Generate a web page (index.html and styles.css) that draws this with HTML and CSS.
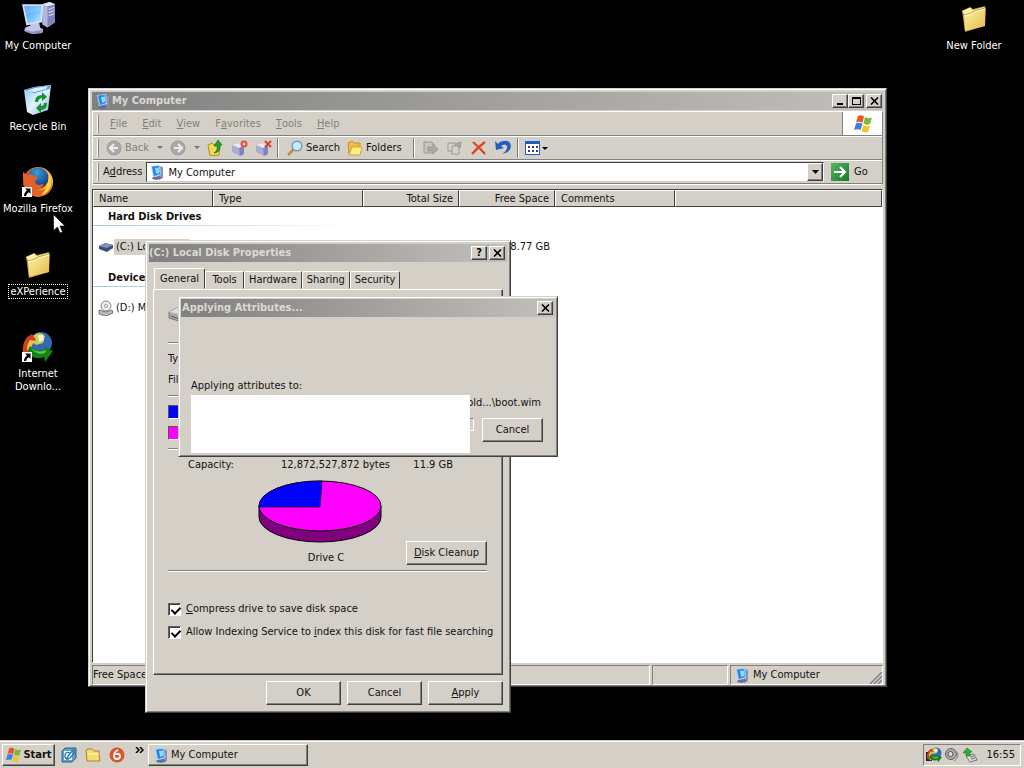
FILE: index.html
```html
<!DOCTYPE html>
<html lang="en">
<head>
<meta charset="utf-8">
<title>Desktop</title>
<link rel="stylesheet" href="styles.css">
</head>
<body>
<svg class="defs" width="0" height="0" aria-hidden="true">
  <defs>
    <linearGradient id="scr" x1="0" y1="0" x2="1" y2="1"><stop offset="0" stop-color="#2f8df0"/><stop offset=".6" stop-color="#7cc8fb"/><stop offset="1" stop-color="#b9eaff"/></linearGradient>
    <linearGradient id="fold" x1="0" y1="0" x2="1" y2="1"><stop offset="0" stop-color="#fff3a6"/><stop offset="1" stop-color="#e3b94c"/></linearGradient>
    <linearGradient id="binG" x1="0" y1="0" x2="1" y2="1"><stop offset="0" stop-color="#8fc3ee"/><stop offset=".5" stop-color="#e2f3ff"/><stop offset="1" stop-color="#7fb2e2"/></linearGradient>
    <linearGradient id="fox" x1="0" y1="0" x2="1" y2="0"><stop offset="0" stop-color="#d8401a"/><stop offset=".6" stop-color="#f38b1c"/><stop offset="1" stop-color="#ffd84a"/></linearGradient>
    <radialGradient id="globe" cx=".45" cy=".25" r=".8"><stop offset="0" stop-color="#3a9cd8"/><stop offset="1" stop-color="#0b2f7c"/></radialGradient>
    <linearGradient id="goG" x1="0" y1="0" x2="1" y2="1"><stop offset="0" stop-color="#5cb465"/><stop offset="1" stop-color="#127a24"/></linearGradient>
    <symbol id="pc" viewBox="0 0 32 32">
      <path d="M20 3l7-2 5 2v17l-7 5-5-3z" fill="#b3b5dd"/><path d="M25 5l7-2v17l-7 5z" fill="#8184bd"/><path d="M20 3l7-2 5 2-7 2z" fill="#e6e7f8"/>
      <path d="M26 8l5-2M26 11l5-2M26 14l5-2" stroke="#dfe1f5"/>
      <path d="M8 21l9-1 1 5 3 2-1 3-9 1-8-3 1-3 5-2z" fill="#c4c5e4"/><path d="M3 27l8 2 9-2-1 3-9 1-6-2z" fill="#8f91c0"/>
      <path d="M1 3l20 0-1 17L5 23z" fill="#d8dcf4"/><path d="M3 5l16-.5-1 14L6.500 21z" fill="url(#scr)"/><path d="M3 5l16-.5-.3 4L4.500 13z" fill="#a2d6ff" opacity=".4"/>
    </symbol>
    <symbol id="pcs" viewBox="0 0 14 15">
      <path d="M9 1l4 1v11l-4 2z" fill="#8c8fb8"/><path d="M3 12l6-1 3 2-5 2-5-1z" fill="#666b9c"/>
      <path d="M1 1l9-1 1 10-8 2z" fill="#a9d3f6"/><path d="M2 1.500l7-.5 1 8-6 2z" fill="#1f86ea"/><path d="M5 3l4-.5 .7 5-3.500 1.500z" fill="#8bdcff"/>
    </symbol>
    <symbol id="folder" viewBox="0 0 28 28">
      <path d="M2 6l8-4 3 2 12-3 1 3-1 17-20 6z" fill="#b98f2e"/><path d="M2 6l8-3.500 3 2.500L24 2l1 3L5 11z" fill="#fff0a0"/>
      <path d="M4 10l7-2 3-3 11-2 0 18-20 5z" fill="url(#fold)"/><path d="M4 10l7-2 3-2 11-3" fill="none" stroke="#a58530" stroke-width=".7"/><path d="M4 11l8-2 3-2 10-3" fill="none" stroke="#fffad2"/>
    </symbol>
    <symbol id="shortcut" viewBox="0 0 10 10"><path d="M0 0h10v10H0z" fill="#fff"/><path d="M3 1.500h5.500V7L6.800 5.300Q4.500 6.500 4 9H2Q2 5.500 5 3.500z" fill="#000"/></symbol>
    <symbol id="idm" viewBox="0 0 32 32">
      <circle cx="20" cy="12" r="11" fill="#3468b4"/><path d="M12 5q7-6 12 0l-2 7-7 2-5-4z" fill="#c8d050"/><path d="M17 4l5 0 1 5-5 2z" fill="#eef6d5"/>
      <path d="M11 3Q0 8 2 23l8 5Q6 13 15 9z" fill="#cf3e23"/><path d="M9 9q-6 8 0 17l3 0Q7 15 15 10z" fill="#f0c447"/>
      <path d="M9 15q8 7 15 3l-2-3 10 5-8 11-1-5q-10 4-17-5z" fill="#14801a"/><path d="M10 17q7 6 15 2l-1 3q-8 3-14-5z" fill="#5ccc4c"/>
    </symbol>
    <symbol id="flag" viewBox="0 0 20 18">
      <path d="M5 1q3-1.500 6 .5L9.500 8Q7 6 3 7.500z" fill="#e8542a"/><path d="M12 2q3 2 7 .5L17 9q-4 1.500-6.500-.5z" fill="#7cb83a"/>
      <path d="M3 8.500q4-1.500 6.500.5L7.500 15Q5 13.500 1 15z" fill="#3f7fd8"/><path d="M10.500 10q3 1.500 6.500.5L15 17q-4 1-6.500-1z" fill="#f5c32c"/>
    </symbol>
    <symbol id="x" viewBox="0 0 9 8"><path d="M1 .5l7 7M8 .5l-7 7" stroke="#000" stroke-width="1.600"/></symbol>
    <symbol id="mail" viewBox="0 0 18 16"><path d="M1 5l8-2 4 3v8l-4 2-8-4z" fill="#a9abd0"/><path d="M1 5l8-2 4 3-5 2z" fill="#e7e7f5"/><path d="M8 8l5-2v8l-4 2z" fill="#8083bb"/></symbol>
  </defs>
</svg>

<main class="desktop">
  <a href="#" class="shortcut s-computer"><svg width="34" height="34"><use href="#pc"/></svg><span>My Computer</span></a>
  <a href="#" class="shortcut s-bin"><svg width="32" height="32" viewBox="1 0 32 32"><path d="M3 6l10-3 17-2-3 25-15 5-6-3z" fill="url(#binG)"/><path d="M3 6l10-3 17-2-2 4-14 4z" fill="#5c9bd4"/><path d="M5 7l9-3 13-2-2 3-11 3z" fill="#d8efff"/><path d="M14 18q0-7 7-7V8l5 5-5 4v-3q-3 0-4 4zM26 19q0 7-6 7v3l-5-5 5-5v3q3 0 3-3z" fill="#159526"/></svg><span>Recycle Bin</span></a>
  <a href="#" class="shortcut s-firefox"><svg width="32" height="32" viewBox="1 0 32 32"><circle cx="17" cy="16" r="15" fill="url(#fox)"/><circle cx="17" cy="12" r="10.500" fill="url(#globe)"/><path d="M2 6l4 3q4-2 7 1l4 1-3 4q0 3 4 4l5-1q-3 6-9 4 5 5 12 0 5-5 1-14 7 8 2 17-6 7-15 5Q1 26 2 6z" fill="#e4622a"/><path d="M28 8q5 8 0 16-3 4-8 5 8-8 8-21z" fill="#ffd33a"/><use href="#shortcut" x="1" y="21" width="10" height="10"/></svg><span>Mozilla Firefox</span></a>
  <a href="#" class="shortcut s-exp"><svg width="28" height="28"><use href="#folder"/></svg><span class="focus">eXPerience</span></a>
  <a href="#" class="shortcut s-idm"><svg width="32" height="32" viewBox="1 0 32 32"><use href="#idm" width="32" height="32"/><use href="#shortcut" x="1" y="21" width="10" height="10"/></svg><span>Internet Downlo...</span></a>
  <a href="#" class="shortcut s-new"><svg width="28" height="28"><use href="#folder"/></svg><span>New Folder</span></a>

  <section class="window explorer" aria-label="My Computer">
    <header class="title"><svg width="14" height="15"><use href="#pcs"/></svg><h1>My Computer</h1>
      <button class="cap" aria-label="Minimize"><svg width="9" height="8"><path d="M1 6h6v2H1z"/></svg></button><button class="cap" aria-label="Maximize"><svg width="9" height="8"><path d="M0 0h9v8H0zM1 2v5h7V2z" fill-rule="evenodd"/></svg></button><button class="cap close" aria-label="Close"><svg width="9" height="8"><use href="#x"/></svg></button>
    </header>
    <div class="bars">
      <nav class="bar menu"><i class="grip"></i><button><u>F</u>ile</button><button><u>E</u>dit</button><button><u>V</u>iew</button><button>F<u>a</u>vorites</button><button><u>T</u>ools</button><button><u>H</u>elp</button><span class="brand"><svg width="20" height="18"><use href="#flag"/></svg></span></nav>
      <div class="bar tools"><i class="grip"></i>
        <button class="off back"><svg width="16" height="16"><circle cx="8" cy="8" r="7" fill="#aaa" stroke="#999"/><path d="M8 4L4 8l4 4M4 8h8" fill="none" stroke="#eee" stroke-width="2"/></svg>Back</button>
        <button aria-label="Back list"><svg width="7" height="4"><path d="M1 0h6L4 3z" fill="#777"/></svg></button>
        <button aria-label="Forward"><svg width="16" height="16"><circle cx="8" cy="8" r="7" fill="#aaa" stroke="#999"/><path d="M8 4l4 4-4 4M12 8H4" fill="none" stroke="#eee" stroke-width="2"/></svg></button>
        <button aria-label="Forward list"><svg width="7" height="4"><path d="M1 0h6L4 3z" fill="#777"/></svg></button>
        <button class="sq" aria-label="Up"><svg width="16" height="16" viewBox="0 0 16 16"><path d="M1 5l4-2 2 2 6-1-1 11-9 1z" fill="#f6d855" stroke="#b28d20"/><path d="M7 13q4-2 3-7H7l4-6 4 5h-2q1 7-6 8z" fill="#28a328" stroke="#10701a" stroke-width=".7"/></svg></button>
        <button class="sq" aria-label="Move to"><svg width="18" height="16"><use href="#mail"/><circle cx="13" cy="4" r="2.500" fill="none" stroke="#e05038" stroke-width="2"/></svg></button>
        <button class="sq" aria-label="Copy to"><svg width="18" height="16"><use href="#mail"/><path d="M10 1l6 6M16 1l-6 6" stroke="#d8402a" stroke-width="2"/></svg></button>
        <i class="sep"></i>
        <button><svg width="16" height="16"><path d="M1 15l6-6" stroke="#c48a4a" stroke-width="2.500"/><circle cx="10" cy="6" r="4.800" fill="#c5ecfb" stroke="#7099bd" stroke-width="1.500"/></svg>Search</button>
        <button class="folders"><svg width="16" height="16"><path d="M1 3l4-2 2 2h6v11H2z" fill="#eebd3d" stroke="#c3942b"/><path d="M5 7h10l-2 8H2z" fill="#ffec83" stroke="#d2a636"/></svg>Folders</button>
        <i class="sep"></i>
        <button class="sq" aria-label="Move"><svg width="16" height="16" fill="#c6c3bb" stroke="#999"><path d="M1 2h8l2 2v9H1z"/><path d="M5 7h5V4l5 5-5 5v-3H5z" fill="#aaa"/></svg></button>
        <button class="sq" aria-label="Copy"><svg width="16" height="16" fill="#d5d2cb" stroke="#999"><path d="M1 3h7v8H1z"/><path d="M5 6h7v8H5z"/><path d="M8 4l6-2-1 6z" fill="#aaa"/></svg></button>
        <button class="sq" aria-label="Delete"><svg width="16" height="16"><path d="M2 2q6 5 12 12M14 2Q7 7 1 14" fill="none" stroke="#df4220" stroke-width="2.200"/></svg></button>
        <button class="sq" aria-label="Undo"><svg width="16" height="16"><path d="M0 1l1 9 8-2-3-2q4-3 6 0 1 4-5 8 9-2 9-8Q15 0 9 1 5 1 3 4z" fill="#1f5fc0"/></svg></button>
        <i class="sep"></i>
        <button class="views" aria-label="Views"><svg width="24" height="16"><path d="M1 1h15v14H1z" fill="#1d5fc0"/><path d="M2 4h13v10H2z" fill="#fff"/><path d="M4 6h2v2H4zm4 0h2v2H8zm4 0h2v2h-2zM4 10h2v2H4zm4 0h2v2H8zm4 0h2v2h-2z" fill="#437"/><path d="M18 7h6l-3 3z"/></svg></button>
      </div>
      <div class="bar address"><i class="grip"></i><label for="addr">A<u>d</u>dress</label>
        <span class="field"><svg width="14" height="15"><use href="#pcs"/></svg><input id="addr" value="My Computer"><button class="drop" aria-label="Open address list"><svg width="7" height="4"><path d="M0 0h7L3.500 4z"/></svg></button></span>
        <button class="go"><svg width="18" height="18"><path d="M0 0h18v18H0z" fill="url(#goG)"/><path d="M3 9h11M9 4l5 5-5 5" fill="none" stroke="#fff" stroke-width="2"/></svg>Go</button>
      </div>
    </div>
    <div class="list">
      <table>
        <colgroup><col class="c1"><col class="c2"><col class="c3"><col class="c3"><col class="c1"><col></colgroup>
        <thead><tr><th>Name</th><th>Type</th><th class="num">Total Size</th><th class="num">Free Space</th><th>Comments</th><th></th></tr></thead>
        <tbody>
          <tr class="group"><td colspan="6">Hard Disk Drives</td></tr>
          <tr class="disk"><td><a href="#"><svg width="16" height="12"><path d="M1 5l6-3 8 2v3l-6 4-8-3z" fill="#414e74"/><path d="M1 5l6-3 8 2-6 3z" fill="#7d91bd"/></svg><span class="sel">(C:) Local Disk</span></a></td><td></td><td></td><td class="num">8.77 GB</td><td></td><td></td></tr>
          <tr class="group"><td colspan="6">Devices</td></tr>
          <tr class="disk"><td><a href="#"><svg width="16" height="16"><circle cx="8" cy="6" r="5" fill="#ececec" stroke="#888"/><circle cx="8" cy="6" r="1.500" fill="#fff" stroke="#999"/><path d="M1 10l7 2 6-2 1 3-7 3-7-2z" fill="#bbb" stroke="#777"/></svg><span>(D:) M</span></a></td><td></td><td></td><td></td><td></td><td></td></tr>
        </tbody>
      </table>
    </div>
    <footer class="status"><span class="wide">Free Space</span><span class="mid"></span><span class="place"><svg width="14" height="15"><use href="#pcs"/></svg>My Computer<svg class="size" width="12" height="12"><path d="M0 12L12 0M4 12l8-8M8 12l4-4" stroke="#808080" stroke-width="1.500"/></svg></span></footer>
  </section>

  <section class="window props" aria-label="Disk properties">
    <header class="title"><h2>(C:) Local Disk Properties</h2><button class="cap" aria-label="Help"><b>?</b></button><button class="cap close" aria-label="Close"><svg width="9" height="8"><use href="#x"/></svg></button></header>
    <div class="tabs"><button class="on">General</button><button>Tools</button><button>Hardware</button><button>Sharing</button><button>Security</button></div>
    <div class="panel">
      <div class="drive"><svg width="32" height="20"><path d="M1 5l8-4 20 3v7l-8 6L1 11z" fill="#aaa" stroke="#777"/><path d="M1 5l8-4 20 3-8 5z" fill="#ddd"/><path d="M3 9l8 3" stroke="#555"/></svg></div>
      <hr>
      <div class="line">Type:</div><div class="line">File system:</div>
      <hr>
      <div class="line"><i class="swatch used"></i></div><div class="line"><i class="swatch free"></i></div>
      <hr>
      <div class="capacity"><span>Capacity:</span><span>12,872,527,872 bytes</span><span>11.9 GB</span></div>
      <div class="chart">
        <figure><svg width="124" height="64" viewBox="0 0 124 64"><path d="M1 26v11a61 25 0 0 0 122 0V26z" fill="#800080" stroke="#000"/><ellipse cx="62" cy="26" rx="61" ry="25" fill="#f0f" stroke="#000"/><path d="M62 27H1A61 25 0 0 1 64 1z" fill="#00f" stroke="#202" stroke-width=".8"/></svg><figcaption>Drive C</figcaption></figure>
        <button class="btn"><u>D</u>isk Cleanup</button>
      </div>
      <hr>
      <div class="checks"><label><input type="checkbox" checked><span><u>C</u>ompress drive to save disk space</span></label>
      <label><input type="checkbox" checked><span>Allow Indexing Service to <u>i</u>ndex this disk for fast file searching</span></label></div>
    </div>
    <div class="actions"><button class="btn">OK</button><button class="btn">Cancel</button><button class="btn"><u>A</u>pply</button></div>
  </section>

  <section class="window applying" aria-label="Applying attributes">
    <header class="title"><h2>Applying Attributes...</h2><button class="cap close" aria-label="Close"><svg width="9" height="8"><use href="#x"/></svg></button></header>
    <div class="progress">
      <p>Applying attributes to:</p><p class="path">old...\boot.wim</p>
      <div class="run"><span class="track"></span><button class="btn">Cancel</button></div>
      <div class="cover"></div>
    </div>
  </section>

  <svg class="cursor" width="12" height="20" viewBox="0 0 12 20"><path d="M.5.5v16l4-3.500 2.500 6 2.500-1-2.500-6H12z" fill="#fff" stroke="#000" stroke-width=".6"/></svg>
</main>

<footer class="taskbar">
  <button class="btn start"><svg width="17" height="16"><use href="#flag"/></svg>Start</button>
  <nav class="quick">
    <a href="#" aria-label="Show desktop"><svg width="16" height="16"><path d="M4 1h11v10l-4 4H1V4z" fill="#5ba2cc" stroke="#28638e"/><path d="M3 4h8v9H3z" fill="#eef8ff"/><path d="M12 3L7 9l-1 3 3-1 5-6zM9 6Q5 4 4 8t4 4" fill="none" stroke="#2d77a8" stroke-width="1.300"/></svg></a>
    <a href="#" aria-label="Folder"><svg width="16" height="16"><path d="M1 3l2-1h4l2 2h5v3l1 7H2z" fill="#f4dc6c" stroke="#a58530"/><path d="M3 7h11" stroke="#fff8c0"/></svg></a>
    <a href="#" aria-label="Burner"><svg width="16" height="16"><circle cx="8" cy="8" r="7.500" fill="#d9562f"/><path d="M9 3Q5 5 5 9q0 3 3 3t3-3q0-2-2-2t-2 1" fill="none" stroke="#fff" stroke-width="1.800"/></svg></a>
    <button aria-label="More"><svg width="9" height="6"><path d="M1 0l3 3-3 3M5 0l3 3-3 3" fill="none" stroke="#000" stroke-width="1.500"/></svg></button>
  </nav>
  <button class="btn task"><svg width="14" height="15"><use href="#pcs"/></svg>My Computer</button>
  <div class="tray"><svg width="16" height="16" viewBox="0 0 32 32"><path d="M0 10h12v18H0z" fill="#123"/><use href="#idm" width="32" height="32"/></svg>
    <svg width="16" height="16"><circle cx="7" cy="7" r="5.500" fill="#aaa" stroke="#666"/><circle cx="6.500" cy="7" r="2.500" fill="#ddd" stroke="#555"/><path d="M13 5q3 5-3 9" fill="none" stroke="#888"/></svg>
    <svg width="16" height="16"><path d="M4 9l8-2 3 6-7 2z" fill="#ddd" stroke="#777"/><path d="M8 10l4-1M9 12l4-1" stroke="#666"/><path d="M4 9V6H1l4-5 5 4H8v4z" fill="#2eac35" stroke="#137a1c" stroke-width=".6"/></svg><time>16:55</time></div>
</footer>
</body>
</html>
```

FILE: styles.css
```css
* { box-sizing: border-box; }
body {
  margin: 0;
  height: 100vh;
  display: flex;
  flex-direction: column;
  overflow: hidden;
  background: #000;
  color: #111;
  font: 11px/14px "DejaVu Sans Condensed", "DejaVu Sans", sans-serif;
}
button, input { font: inherit; color: inherit; margin: 0; }
button { background: none; border: 0; padding: 0; display: flex; align-items: center; white-space: nowrap; }
a { color: inherit; text-decoration: none; }
h1, h2, p, figure { margin: 0; font-size: inherit; }
svg { display: block; flex: none; }
.defs { position: absolute; }
.desktop { position: relative; flex: 1; }

.shortcut {
  position: absolute;
  left: 0;
  width: 76px;
  display: flex;
  flex-direction: column;
  align-items: center;
  gap: 4px;
  color: #fff;
  text-align: center;
  line-height: 13px;
}
.shortcut span { white-space: nowrap; }
.s-computer { top: 1px; }
.s-bin { top: 84px; }
.s-firefox { top: 166px; }
.s-exp { top: 251px; }
.s-idm { top: 331px; }
.s-idm span { white-space: normal; width: 60px; }
.s-new { top: 5px; left: auto; right: 12px; gap: 6px; }
.shortcut .focus { outline: 1px dotted #fff; padding: 0 1px; margin-top: 2px; }

.window {
  position: absolute;
  display: flex;
  flex-direction: column;
  background: #d4d0c8;
  padding: 3px;
  border: 1px solid;
  border-color: #d4d0c8 #404040 #404040 #d4d0c8;
  box-shadow: inset 1px 1px #fff, inset -1px -1px #808080;
}
.title {
  display: flex;
  align-items: center;
  height: 18px;
  flex: none;
  padding-right: 2px;
  background: linear-gradient(90deg, #808080, #c2c0bc);
  color: #dcd9d2;
  font-weight: bold;
}
.title h1, .title h2 { flex: 1; }
.cap, .btn, .drop {
  justify-content: center;
  background: #d4d0c8;
  border: 1px solid;
  border-color: #fff #404040 #404040 #fff;
  box-shadow: inset -1px -1px #808080;
}
.cap { width: 16px; height: 14px; color: #000; }
.close { margin-left: 2px; }

.explorer { left: 88px; top: 88px; right: 137px; bottom: 53px; padding-bottom: 1px; }
.explorer .title { padding: 0 1px 0 4px; gap: 0; }
.explorer .title h1 { padding-left: 2px; }
.bars { border: 1px solid #fff; border-right-color: #808080; margin-top: 1px; }
.bar { display: flex; align-items: center; height: 24px; padding-left: 4px; border-bottom: 1px solid #808080; }
.bar + .bar { border-top: 1px solid #fff; }
.grip { width: 2px; height: 18px; border-right: 1px solid #808080; border-left: 1px solid #fff; }
.menu { color: #848077; gap: 15px; }
.menu .grip { margin-right: -4px; }
.brand { margin-left: auto; align-self: stretch; width: 40px; background: #fff; border-left: 1px solid #808080; display: flex; align-items: center; justify-content: center; }
.tools { gap: 7px; }
.tools button { gap: 3px; }
.tools .off { color: #848077; }
.tools .sq { width: 17px; }
.tools .sep { margin: 0 1px 0 -2px; }
.tools .folders { margin-right: 6px; }
.tools .views { margin-left: -3px; }
.sep { width: 2px; height: 20px; border-left: 1px solid #808080; border-right: 1px solid #fff; }
.address { gap: 4px; }
.field { flex: 1; display: flex; align-items: center; height: 20px; background: #fff; border: 1px solid #404040; border-right-color: #fff; border-bottom-color: #d4d0c8; padding-left: 3px; gap: 3px; }
.field input { flex: 1; min-width: 0; border: 0; background: none; padding: 1px 1px 0; outline: 0; }
.drop { width: 16px; height: 18px; }
.go { gap: 5px; width: 54px; padding-left: 3px; }

.list { flex: 1; min-height: 0; overflow: hidden; margin-top: 4px; background: #fff; border: 1px solid #404040; border-color: #404040 #fff #fff #404040; }
table { width: 100%; table-layout: fixed; border-collapse: separate; border-spacing: 0; }
.c1 { width: 120px; }
.c2 { width: 150px; }
.c3 { width: 96px; }
th { height: 17px; padding: 1px 5px 0; font-weight: normal; text-align: left; background: #d4d0c8; border: 1px solid; border-color: #fff #404040 #404040 #fff; line-height: 14px; }
td { padding: 0 5px; }
.num { text-align: right; }
.group td { height: 19px; padding: 0 0 0 15px; font-weight: bold; background: linear-gradient(90deg, #a9c8da, #fff) no-repeat 0 100% / 262px 1px; }
.disk td { height: 42px; }
.disk td:first-child { padding: 0 0 0 5px; }
.disk a { display: flex; align-items: center; white-space: nowrap; }
.disk a span { padding: 1px 2px; }
.disk .sel { background: #d4d0c8; }

.status { display: flex; gap: 2px; height: 20px; margin-top: 2px; flex: none; }
.status > span { display: flex; align-items: center; border: 1px solid; border-color: #808080 #fff #fff #808080; white-space: nowrap; }
.status .wide { flex: 1; }
.status .mid { width: 76px; }
.status .place { width: 153px; padding-left: 4px; gap: 4px; }
.status .size { margin-left: auto; align-self: flex-end; }

.props { left: 145px; top: 240px; width: 366px; }
.tabs { display: flex; align-items: flex-end; height: 27px; margin: 0 5px; }
.tabs button { justify-content: center; min-width: 39px; height: 18px; padding: 0 4px; border: 1px solid; border-color: #fff #404040 transparent #fff; border-radius: 2px 2px 0 0; }
.tabs .on { height: 21px; padding: 0 5px; }
.panel { margin: 0 4px; padding: 17px 15px 35px 14px; border: 1px solid; border-color: #fff #404040 #404040 #fff; box-shadow: inset -1px -1px #808080; }
hr { margin: 0; height: 2px; border: 0; border-top: 1px solid #808080; border-bottom: 1px solid #fff; }
.drive { height: 35px; }
.line { height: 21px; display: flex; align-items: center; }
hr + .line { margin-top: 4px; }
.line + hr { margin-top: 5px; }
.swatch { width: 14px; height: 14px; border: 1px solid; border-color: #555 #fff #fff #555; }
.used { background: #00f; }
.free { background: #f0f; }
.capacity { display: grid; grid-template-columns: 80px 1fr 63px; margin: 8px 34px 0 20px; text-align: right; }
.capacity span:first-child { text-align: left; }
.chart { display: flex; align-items: flex-end; justify-content: space-between; padding: 8px 0 5px 90px; }
figcaption { text-align: center; margin: 7px 0 0 12px; }
.chart .btn { width: 81px; }
.checks { display: flex; flex-direction: column; gap: 9px; padding-top: 30px; }
.checks label { display: flex; align-items: center; gap: 5px; white-space: nowrap; }
.checks input { appearance: none; width: 13px; height: 13px; flex: none; border: 1px solid; border-color: #606060 #fff #fff #606060; box-shadow: inset 1px 1px #404040; background: #fff; position: relative; }
.checks input:checked::after { content: ""; position: absolute; left: 4px; top: 1px; width: 4px; height: 7px; border: solid #000; border-width: 0 2px 2px 0; transform: rotate(45deg); }
.btn { height: 24px; }
.actions { display: flex; justify-content: flex-end; gap: 6px; padding: 6px 4px 4px; }
.actions .btn { width: 75px; }

.applying { left: 178px; top: 296px; width: 380px; padding: 2px; }
.applying .title { padding-left: 1px; }
.progress { position: relative; padding: 62px 12px 12px 10px; }
.progress .path { text-align: right; margin: 3px 2px 8px 0; }
.run { display: flex; gap: 8px; }
.track { flex: 1; height: 13px; border: 1px solid; border-color: #808080 #fff #fff #808080; }
.run .btn { width: 61px; }
.cover { position: absolute; left: 10px; top: 78px; width: 279px; bottom: 1px; background: #fff; }
.cursor { position: absolute; left: 53px; top: 214px; }

.taskbar { display: flex; align-items: center; height: 28px; padding: 2px 3px 0 2px; background: #d4d0c8; box-shadow: inset 0 1px #d4d0c8, inset 0 2px #fff; }
.taskbar .btn { height: 22px; gap: 1px; }
.start { font-weight: bold; width: 53px; }
.quick { display: flex; align-items: center; gap: 8px; width: 93px; padding-left: 6px; }
.quick button { align-self: flex-start; margin-left: 2px; }
.taskbar .task { width: 160px; justify-content: flex-start; padding-left: 5px; gap: 3px; }
.tray { margin-left: auto; height: 22px; width: 98px; display: flex; align-items: center; gap: 2px; padding: 0 5px 0 2px; border: 1px solid; border-color: #808080 #fff #fff #808080; }
.tray time { margin-left: auto; }
```
